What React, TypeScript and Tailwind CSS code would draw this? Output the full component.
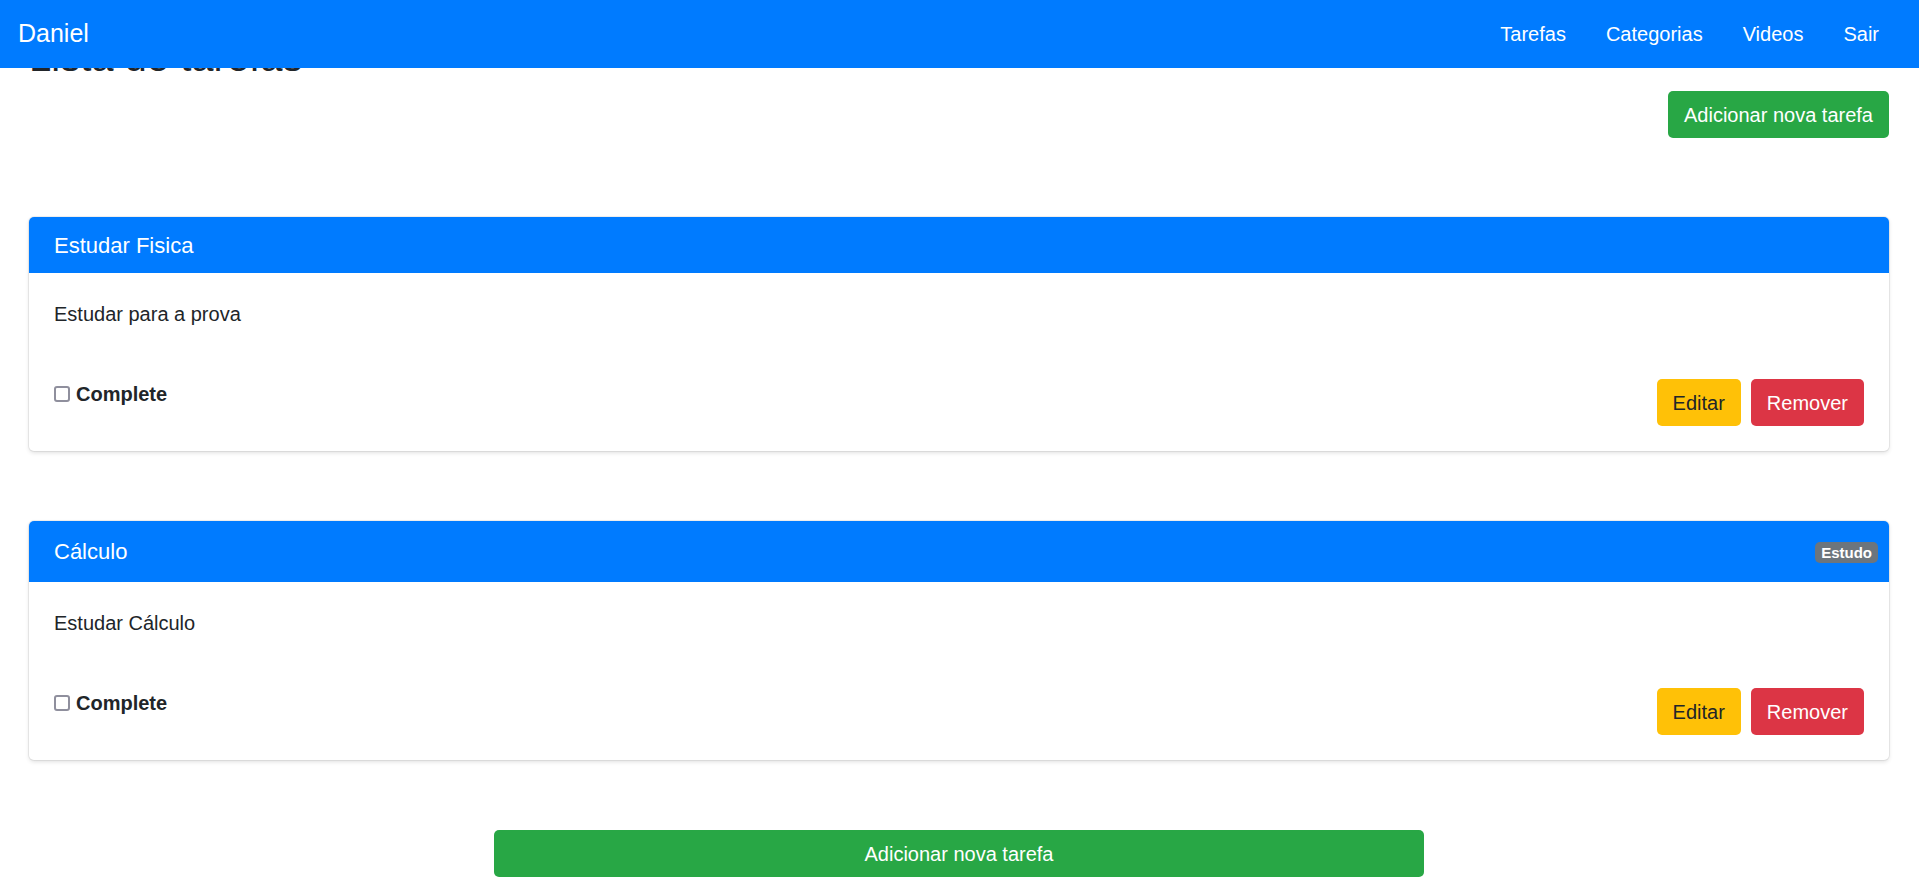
const tasks = [
    { title: 'Estudar Fisica', description: 'Estudar para a prova', category: null as string | null },
    { title: 'Cálculo', description: 'Estudar Cálculo', category: 'Estudo' },
];

function TaskCard({ title, description, category }: { title: string; description: string; category: string | null }) {
    return (
        <div className="rounded-[5px] bg-white shadow-[0_0_0_1px_rgba(0,0,0,0.06),0_2px_4px_rgba(0,0,0,0.12)] overflow-hidden">
            {/* Header */}
            <div
                className={`flex items-center justify-between bg-[#007bff] text-white pl-[25px] pr-[11px] ${
                    category ? 'h-[61px]' : 'h-[56px]'
                }`}
            >
                <span className="text-[22px] leading-[33px]">{title}</span>
                {category && (
                    <span className="mt-[2px] rounded-[5px] bg-[#6c757d] px-[6px] text-[15px] leading-[21px] font-bold text-white">
                        {category}
                    </span>
                )}
            </div>

            {/* Body */}
            <div className="px-[25px] pt-[26px] pb-[25px]">
                <p className="text-[20px] leading-[30px] text-[#212529] mb-[50px]">{description}</p>
                <div className="flex items-start justify-between">
                    <label className="flex items-center gap-[6px] text-[20px] leading-[30px] font-bold text-[#212529]">
                        <span className="w-[16px] h-[16px] rounded-[3px] border-2 border-[#8f8f9d] bg-white" />
                        Complete
                    </label>
                    <div className="flex gap-[10px]">
                        <button className="h-[47px] px-[16px] rounded-[5px] bg-[#ffc107] text-[20px] text-[#212529]">
                            Editar
                        </button>
                        <button className="h-[47px] px-[16px] rounded-[5px] bg-[#dc3545] text-[20px] text-white">
                            Remover
                        </button>
                    </div>
                </div>
            </div>
        </div>
    );
}

export default function App() {
    return (
        <div className="min-h-screen bg-white font-['Liberation_Sans',Arial,sans-serif] text-[#212529]">
            {/* Fixed navbar */}
            <nav className="fixed top-0 inset-x-0 z-10 h-[68px] bg-[#007bff] flex items-center justify-between pl-[18px] pr-[20px]">
                <span className="text-[25px] text-white">Daniel</span>
                <div className="flex">
                    {['Tarefas', 'Categorias', 'Videos', 'Sair'].map((item) => (
                        <a key={item} className="px-[20px] text-[20px] leading-[30px] text-white cursor-pointer">
                            {item}
                        </a>
                    ))}
                </div>
            </nav>

            <main className="pl-[29px] pr-[30px] pt-[33px] pb-[18px]">
                <h2 className="text-[40px] leading-[48px] font-medium mb-[10px]">Lista de tarefas</h2>
                <div className="flex justify-end">
                    <button className="h-[47px] px-[16px] rounded-[5px] bg-[#28a745] text-[20px] text-white">
                        Adicionar nova tarefa
                    </button>
                </div>

                <div className="mt-[79px] flex flex-col gap-[70px]">
                    {tasks.map((t) => (
                        <TaskCard key={t.title} {...t} />
                    ))}
                </div>

                <div className="mt-[70px] flex justify-center">
                    <button className="w-[930px] h-[47px] rounded-[5px] bg-[#28a745] text-[20px] text-white">
                        Adicionar nova tarefa
                    </button>
                </div>
            </main>
        </div>
    );
}
